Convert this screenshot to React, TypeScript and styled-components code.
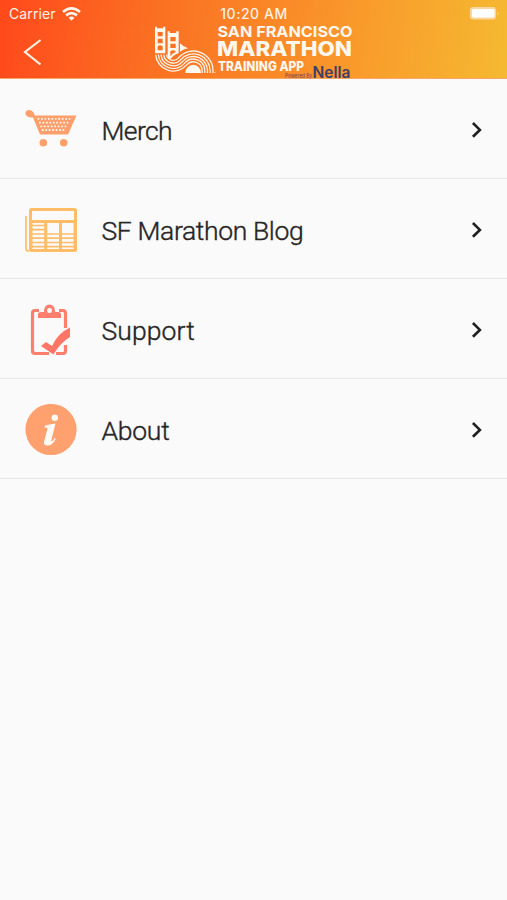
import React from 'react';
import styled, { createGlobalStyle } from 'styled-components';

const GlobalStyle = createGlobalStyle`
  * { box-sizing: border-box; }
  body { margin: 0; background: #fafafa; }
`;

const Screen = styled.main`
  min-height: 900px;
  background: #fafafa;
  font-family: Roboto, "Liberation Sans", sans-serif;
  color: #262626;
`;

const Header = styled.header`
  height: 79px;
  display: flex;
  flex-direction: column;
  background: linear-gradient(97deg, #ff491c 0%, #fb6f22 30%, #f99a2b 70%, #f5b931 100%);
  border-bottom: 1px solid #f6a765;
`;

const StatusBar = styled.div`
  height: 24px;
  flex: none;
  display: grid;
  grid-template-columns: 1fr auto 1fr;
  align-items: center;
  padding: 3px 6px 0 9px;
  font-family: Inter, sans-serif;
  color: #fff1e4;
`;

const Carrier = styled.div`
  display: flex;
  align-items: center;
  gap: 6px;
  font-size: 14px;
  letter-spacing: 0.1px;
`;

const Clock = styled.time`
  font-size: 14px;
  font-weight: 500;
  letter-spacing: 0.55px;
  margin-right: 2px;
`;

const Battery = styled.svg`
  justify-self: end;
`;

const NavBar = styled.nav`
  height: 54px;
  display: grid;
  grid-template-columns: 150px 210px 1fr;
`;

const BackButton = styled.button`
  border: 0;
  background: none;
  padding: 14px 0 0 22px;
  display: flex;
  align-items: flex-start;
`;

const MenuList = styled.ul`
  list-style: none;
  margin: 0;
  padding: 0;
`;

const MenuItem = styled.li`
  height: 100.1px;
  display: grid;
  grid-template-columns: 77px 1fr 14px;
  column-gap: 24.5px;
  align-items: center;
  padding: 2px 23px 0 0;
  border-bottom: 1px solid #e8e8e8;
`;

const IconSlot = styled.span`
  display: flex;
  justify-content: flex-end;
`;

const Label = styled.span<{ $tracking: number }>`
  font-size: 26.5px;
  font-weight: 300;
  -webkit-text-stroke: 0.4px #262626;
  line-height: 32px;
  padding-top: 3px;
  letter-spacing: ${(p) => p.$tracking}px;
  white-space: nowrap;
`;

const Wifi = () => (
  <svg width="19" height="14" viewBox="0 0 19 14" fill="none" stroke="#fff5ec" strokeWidth="2.700">
    <path d="M1 5Q9.500-2.200 18 5" />
    <path d="M4.100 8.400Q9.500 3.900 14.900 8.400" />
    <path d="M6.600 10.800Q9.500 8.400 12.400 10.800L9.500 13.800Z" fill="#fff5ec" stroke="none" />
  </svg>
);

const laneRadii = [53, 45, 37, 29, 20.5];
const bowl = { x: 85, y: 160 };
const arch = { x: 145, y: 212 };
const span = Math.hypot(arch.x - bowl.x, arch.y - bowl.y);

const lanePath = (r: number) => {
  const outer = span - r;
  const tx = bowl.x + ((arch.x - bowl.x) * r) / span;
  const ty = bowl.y + ((arch.y - bowl.y) * r) / span;
  return `M${bowl.x - r} ${bowl.y + 4}A${r} ${r} 0 0 0 ${tx} ${ty}A${outer} ${outer} 0 0 1 ${arch.x + outer} ${arch.y}V219`;
};

const Logo = () => (
  <svg width="210" height="54" viewBox="150 24 210 54" overflow="visible">
    <g transform="translate(145 0) scale(.33333)" fill="#fff8ef">
      <path
        fillRule="evenodd"
        d="M30 80h6v5h18v-5h7v80H30ZM38 96v13h15V96ZM38 116v14h15v-14ZM38 139q7-6 15 0v12H38Z"
      />
      <path
        fillRule="evenodd"
        d="M68 94h6v5h20v-5h7v66q-14 3-25 18l-8-5ZM76 111v13h16v-13ZM76 131v13h16v-13ZM76 154v14q6-7 16-12v-2q-8-7-16 0Z"
      />
      <path d="M105 130Q112 138 129 145Q116 147 105 155Z" />
      <path d="M121 219q2-23 24-25q21 2 23 25Z" />
      <g fill="none" stroke="#fff1e4" strokeWidth="4">
        {laneRadii.map((r) => (
          <path key={r} d={lanePath(r)} />
        ))}
      </g>
      <circle cx="210" cy="217" r="1.500" />
    </g>
    <g fill="#fff8ef" fontFamily="Inter, sans-serif" fontWeight="700">
      <text x="217.500" y="36.700" fontSize="15" textLength="135" lengthAdjust="spacingAndGlyphs">SAN FRANCISCO</text>
      <text x="217" y="56" fontSize="20.500" fontWeight="800" textLength="135" lengthAdjust="spacingAndGlyphs">MARATHON</text>
      <text x="218" y="71" fontSize="13" fontWeight="800" textLength="86" lengthAdjust="spacingAndGlyphs">TRAINING APP</text>
    </g>
    <text x="285" y="78" fontSize="5.500" fill="#75415b" fontFamily="Inter, sans-serif" textLength="27" lengthAdjust="spacingAndGlyphs">Powered By</text>
    <text x="312.500" y="78.300" fontSize="15.500" fontWeight="600" fill="#413e68" fontFamily="Inter, sans-serif" textLength="38" lengthAdjust="spacingAndGlyphs">Nella</text>
  </svg>
);

const cartDots = [0, 1, 2, 3].flatMap((row) =>
  Array.from({ length: 10 - row }, (_, col) => ({
    x: 15.2 + row * 1.4 + col * 3.45,
    y: 10.2 + row * 3.7,
  })),
);

const CartIcon = () => (
  <svg width="52" height="52" viewBox="0 0 52 52" fill="#ffa06c">
    <path d="M.5 10.500Q0 6 4 6Q8 6 10 11.500H51.500L43 30.500H15L8 13.500Q2.500 14 .5 10.500Z" />
    <g fill="#fff7f0">
      {cartDots.map((d) => (
        <rect key={`${d.x}-${d.y}`} x={d.x - 2.6} y={d.y + 3.8} width="1.800" height="1.800" rx=".5" />
      ))}
    </g>
    <circle cx="18.300" cy="38.700" r="3.800" />
    <circle cx="38.700" cy="38.700" r="3.800" />
  </svg>
);

const NewsIcon = () => (
  <svg width="52" height="46" viewBox="0 0 52 46" fill="none" stroke="#ffbd68">
    <path d="M1 9V42Q1 44 4 44" strokeWidth="1.700" />
    <rect x="5.500" y="2.500" width="45" height="41" rx="1" strokeWidth="3" />
    <path d="M5 14.500H51M20.700 15V44M35.500 15V44" strokeWidth="3" />
    <path
      d="M7 18.500H20M7 22.700H20M7 27H50M7 31.200H50M7 35.500H50M7 39.600H50"
      strokeWidth="1.700"
    />
    <path d="M6.500 15V44M49.500 15V44" strokeWidth="2" />
  </svg>
);

const ClipboardIcon = () => (
  <svg width="52" height="52" viewBox="0 0 52 52" fill="none">
    <path
      d="M14 6.500H10Q7.500 6.500 7.500 9V46.500Q7.500 49.500 10 49.500H24M34 6.500H38Q40.500 6.500 40.500 9.500V24M40.500 41V47Q40.500 49.500 38 49.500H31"
      stroke="#ff7f6f"
      strokeWidth="3.200"
    />
    <path
      fill="#ff7f6f"
      fillRule="evenodd"
      d="M13 14V10Q13 8 16 8H19Q19 .5 24.500 .5Q30 .5 30 8H33Q36 8 36 10V14ZM22 6.500a2.500 2.500 0 1 0 5 0a2.500 2.500 0 1 0-5 0Z"
    />
    <path fill="#ff7667" d="M16 42L21 38L27 42Q33 29 45 23.500V33Q35 39 28.500 50.500Z" />
  </svg>
);

const InfoIcon = () => (
  <svg width="52" height="52" viewBox="0 0 52 52">
    <circle cx="26" cy="25.500" r="25.600" fill="#ffa16e" />
    <circle cx="29.800" cy="13.800" r="3.200" fill="#fffaf5" />
    <path
      fill="#fffaf5"
      d="M20 21.500Q24 20.500 30.500 19.500L26.500 35.500Q26 37.700 27 37.200Q28.500 36.600 29.500 34L30.800 34.700Q27.500 41.500 22.500 41.500Q18 41.500 19.200 37L22.300 25.500Q22.800 23.500 21.300 23.500L19.500 23.700Z"
    />
  </svg>
);

const Chevron = () => (
  <svg width="14" height="18" viewBox="0 0 14 18" fill="none" stroke="#202020" strokeWidth="2.600">
    <path d="M2.900 2L9.900 8.900L2.900 15.800" />
  </svg>
);

const items = [
  { label: 'Merch', icon: <CartIcon />, tracking: -0.6 },
  { label: 'SF Marathon Blog', icon: <NewsIcon />, tracking: -0.36 },
  { label: 'Support', icon: <ClipboardIcon />, tracking: 0.1 },
  { label: 'About', icon: <InfoIcon />, tracking: -0.25 },
];

export default function App() {
  return (
    <Screen>
      <GlobalStyle />
      <Header>
        <StatusBar>
          <Carrier>
            Carrier
            <Wifi />
          </Carrier>
          <Clock>10:20 AM</Clock>
          <Battery width="32" height="15" viewBox="0 0 32 15">
            <rect x="1" y="1" width="26" height="12.500" rx="3" fill="#fbd6a0" />
            <rect x="3" y="3" width="22.500" height="8.500" rx="1.500" fill="#fff" />
            <path d="M28.500 5.500Q30.500 7.500 28.500 9.500Z" fill="#fbd6a0" />
          </Battery>
        </StatusBar>
        <NavBar>
          <BackButton aria-label="Back">
            <svg width="20" height="28" viewBox="0 0 20 28" fill="none" stroke="#fff1e4" strokeWidth="2.200">
              <path d="M18.500 2L3 14L18.500 26.500" />
            </svg>
          </BackButton>
          <Logo />
        </NavBar>
      </Header>
      <MenuList>
        {items.map((item) => (
          <MenuItem key={item.label}>
            <IconSlot>{item.icon}</IconSlot>
            <Label $tracking={item.tracking}>{item.label}</Label>
            <Chevron />
          </MenuItem>
        ))}
      </MenuList>
    </Screen>
  );
}
